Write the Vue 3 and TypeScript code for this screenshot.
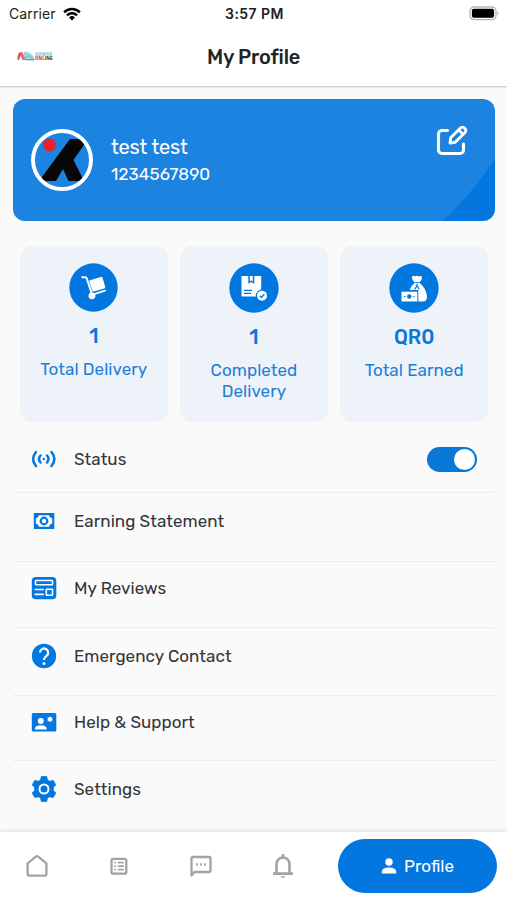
<script setup lang="ts">
import { ref } from 'vue'

interface Stat {
  icon: 'trolley' | 'parcel' | 'money'
  value: string
  label: string
}
interface MenuItem {
  icon: 'status' | 'earning' | 'reviews' | 'emergency' | 'support' | 'settings'
  label: string
}

const online = ref(true)

const stats: Stat[] = [
  { icon: 'trolley', value: '1', label: 'Total Delivery' },
  { icon: 'parcel', value: '1', label: 'Completed Delivery' },
  { icon: 'money', value: 'QR0', label: 'Total Earned' },
]

const menu: MenuItem[] = [
  { icon: 'status', label: 'Status' },
  { icon: 'earning', label: 'Earning Statement' },
  { icon: 'reviews', label: 'My Reviews' },
  { icon: 'emergency', label: 'Emergency Contact' },
  { icon: 'support', label: 'Help & Support' },
  { icon: 'settings', label: 'Settings' },
]
</script>

<template>
  <div class="screen">
    <header class="top">
      <div class="statusbar">
        <div class="carrier">
          <span>Carrier</span>
          <svg class="wifi" viewBox="0 0 19 14">
            <g fill="none" stroke="#000" stroke-width="2.6">
              <path d="M1.2 5.2a11.8 11.8 0 0 1 16.6 0" />
              <path d="M4.2 8.5a7.5 7.5 0 0 1 10.6 0" />
            </g>
            <path d="M6.4 10.7a4.4 4.4 0 0 1 6.2 0L9.5 13.8z" />
          </svg>
        </div>
        <time class="clock">3:57 PM</time>
        <svg class="battery" viewBox="0 0 31 15">
          <rect x="1" y="1" width="26" height="12.6" rx="4" fill="#fff" stroke="#b4b4b4" stroke-width="1.3" />
          <rect x="2.9" y="2.8" width="22.2" height="9" rx="2" fill="#000" />
          <path d="M28.5 5.2q2.2 2.1 0 4.4z" fill="#a9a9a9" />
        </svg>
      </div>
      <div class="titlebar">
        <div class="logo">
          <svg viewBox="0 0 19 11">
            <path d="M7 .8q7-1 10.500 5l1.500 4H8z" fill="#a9dde3" />
            <path d="M0 9.500Q0 2 3.500 1.200L8.500 9.800H6L3.500 5 2 9.500z" fill="#df5060" />
            <path d="M3 1.600l2.500-.8L9.500 9.800H7z" fill="#e8707e" />
            <path d="M7.500 3.500q6 0 9.500 4M9 6q5 0 8 2.500" fill="none" stroke="#5bb5c5" stroke-width=".8" />
            <path d="M9 9.700h10" stroke="#45798d" stroke-width="1" />
          </svg>
          <div class="logo-text">
            <span class="logo-top">ADWAR</span>
            <span class="logo-bottom">ONL<i>INE</i></span>
          </div>
        </div>
        <h1>My Profile</h1>
      </div>
    </header>

    <main>
      <section class="profile-card">
        <svg class="avatar" viewBox="0 0 62 62">
          <clipPath id="avatar-clip"><circle cx="31" cy="31" r="28" /></clipPath>
          <circle cx="31" cy="31" r="30" fill="#1c84e0" />
          <g clip-path="url(#avatar-clip)">
            <path d="M39 10h18L42.500 31 53 52H37.500l-5.500-12-7 12H8z" fill="#070707" />
            <circle cx="18.500" cy="16" r="6.500" fill="#e91f2b" />
          </g>
          <circle cx="31" cy="31" r="29" fill="none" stroke="#fff" stroke-width="3.900" />
        </svg>
        <div class="person">
          <strong>test test</strong>
          <span>1234567890</span>
        </div>
        <svg class="edit" viewBox="0 0 32 32" fill="none" stroke="#fff" stroke-width="3.100" stroke-linecap="round" stroke-linejoin="round">
          <path d="M11.500 5.500H6a3.500 3.500 0 0 0-3.500 3.500v16a3.500 3.500 0 0 0 3.500 3.500h18a3.500 3.500 0 0 0 3.500-3.500v-6" />
          <path d="M14 18l.7-5.200L24.500 3a3.200 3.200 0 0 1 4.500 4.500l-9.800 9.800zM22.800 5l4.200 4.200" stroke-width="2.800" />
        </svg>
      </section>

      <section class="stats">
        <article v-for="s in stats" :key="s.label" class="stat" :class="s.icon">
          <svg class="badge" viewBox="0 0 50 50">
            <circle cx="25" cy="25" r="24.700" fill="#0277df" />
            <g v-if="s.icon === 'trolley'">
              <path d="M13.500 14.500h3.200q1 0 1.400 1.200l5 15" fill="none" stroke="#fff" stroke-width="2" stroke-linecap="round" />
              <path d="M21.500 17.500l11-3.300q1.300-.3 1.700.9l2.700 9.200q.3 1.200-.9 1.600L25.500 29q-1.300.3-1.700-.9l-3.100-9.200q-.3-1.100.8-1.400z" fill="#fff" />
              <circle cx="23.400" cy="33.500" r="3.500" fill="#fff" />
              <path d="M26.500 31.500l10.300-3.300" stroke="#fff" stroke-width="1.900" stroke-linecap="round" />
            </g>
            <g v-else-if="s.icon === 'parcel'">
              <path d="M12.500 13h6.800v7.700l3-1.700 3 1.700V13h6.900v20.500H12.500z" fill="#fff" />
              <path d="M20.800 13h3v5.300l-1.500-.9-1.500.9z" fill="#fff" />
              <path d="M15 27.300h8M15 30.300h7" stroke="#0277df" stroke-width="1.300" />
              <circle cx="33" cy="32.800" r="6.200" fill="#0277df" />
              <circle cx="33" cy="32.800" r="5" fill="#fff" />
              <path d="M30.700 32.700l1.700 1.700 3-3.200" fill="none" stroke="#0277df" stroke-width="1.300" />
            </g>
            <g v-else>
              <path d="M22.800 14q1.700-2 3.700-.6 1.500-1.300 3 0 2.300-1.300 3.700.8 0 2.500-2.700 5h-5Q23 17 22.800 14z" fill="#fff" />
              <path d="M25.500 20h5.200q6.200 5.200 7.300 13 .4 5.500-4.500 5.500h-4.200V27h-8.600q1-4 4.800-7z" fill="#fff" />
              <path d="M28 20.500v2m-2.200 4l2.200-4 2.200 4" fill="none" stroke="#0277df" stroke-width="1.200" />
              <path d="M12.500 28.700h15.800v9.800H12.500z" fill="#fff" />
              <circle cx="20.300" cy="33.500" r="2.200" fill="#0277df" />
              <path d="M15 33.500h1.500m7.700 0h1.500" stroke="#0277df" stroke-width="1.100" />
            </g>
          </svg>
          <b class="value">{{ s.value }}</b>
          <span class="label">{{ s.label }}</span>
        </article>
      </section>

      <ul class="menu">
        <li v-for="m in menu" :key="m.icon" :class="m.icon">
          <div class="entry">
            <svg class="menu-icon" viewBox="0 0 26 26">
              <g v-if="m.icon === 'status'" fill="none" stroke="#0277df" stroke-width="2.500" stroke-linecap="round">
                <path d="M5 6q-5.800 7 0 14M20.500 6q5.800 7 0 14M9.500 9.500q-3 3.500 0 7M16 9.500q3 3.500 0 7" />
                <circle cx="12.800" cy="13" r="1.200" fill="#0277df" stroke="none" />
              </g>
              <g v-else-if="m.icon === 'earning'">
                <path d="M2.800 5h20.500v16H2.800z" fill="#0277df" />
                <path d="M8 7.200h10q.4 2.700 3.200 3.300v5q-2.800.6-3.200 3.300H8q-.4-2.700-3.200-3.300v-5Q7.600 9.900 8 7.200z" fill="#fff" />
                <circle cx="13" cy="13" r="3.300" fill="none" stroke="#0277df" stroke-width="2.200" />
              </g>
              <g v-else-if="m.icon === 'reviews'">
                <rect x=".8" y="2" width="24.500" height="22.300" rx="4" fill="#0277df" />
                <g fill="none" stroke="#fff" stroke-width="1.600">
                  <rect x="4.500" y="5.500" width="17" height="4.200" rx=".8" />
                  <path d="M4.300 14.500h7.900M4.300 19.400h7.900" stroke-linecap="round" />
                  <rect x="15.300" y="14.300" width="6.200" height="6" rx=".5" />
                </g>
              </g>
              <g v-else-if="m.icon === 'emergency'">
                <circle cx="13" cy="13" r="12.200" fill="#0277df" />
                <path d="M9 9.600a4.100 4.100 0 1 1 6.500 3.300q-2.500 1.800-2.500 4" fill="none" stroke="#fff" stroke-width="2.200" />
                <circle cx="13" cy="20.500" r="1.500" fill="#fff" />
              </g>
              <g v-else-if="m.icon === 'support'">
                <rect x=".8" y="4" width="24.500" height="18.400" rx="1.500" fill="#0277df" />
                <circle cx="9.800" cy="12" r="3" fill="#fff" />
                <path d="M3.800 20.500q0-4.200 6-4.200t6 4.200z" fill="#fff" />
                <circle cx="19" cy="10.300" r="2.300" fill="#fff" />
                <path d="M19 7.500v5.600M16.600 8.900l4.800 2.800M21.400 8.900l-4.800 2.800" stroke="#fff" stroke-width=".9" />
              </g>
              <g v-else>
                <path
                  fill="#0277df"
                  d="M10.300.5h5.400l.8 3.400 2.300 1.300 3.300-1 2.800 4.700-2.500 2.400v3.200l2.500 2.500-2.800 4.700-3.300-1-2.300 1.300-.8 3.500h-5.400l-.8-3.500-2.300-1.300-3.300 1L1.100 17l2.500-2.500v-3.200L1.100 8.900l2.800-4.700 3.300 1 2.300-1.300z"
                  stroke="#0277df" stroke-width=".7" stroke-linejoin="round"
                />
                <circle cx="13" cy="13" r="4.500" fill="none" stroke="#fff" stroke-width="2" />
              </g>
            </svg>
            <span>{{ m.label }}</span>
            <button
              v-if="m.icon === 'status'"
              class="toggle" :class="{ on: online }"
              type="button" role="switch" :aria-checked="online"
              @click="online = !online"
            />
          </div>
        </li>
      </ul>
    </main>

    <nav>
      <svg viewBox="0 0 24 24" class="tab">
        <path d="M2.600 9.300v10.400q0 2 2 2h14.800q2 0 2-2V9.300L13.200 2.700q-1.200-.9-2.400 0z" />
      </svg>
      <svg viewBox="0 0 24 24" class="tab">
        <rect x="4.500" y="4.800" width="14.800" height="14.800" rx="1.700" />
        <path d="M7.200 8.700h1.600M7.200 12.200h1.600M7.200 15.700h1.600M10.800 8.700h6M10.800 12.200h6M10.800 15.700h6" stroke-width="1.700" />
      </svg>
      <svg viewBox="0 0 24 24" class="tab">
        <path d="M2.500 21.500V4.500q0-1.500 1.500-1.500h16q1.500 0 1.500 1.500v12q0 1.500-1.500 1.500H5.500z" />
        <path d="M7.200 10.500h1.700M11.200 10.500h1.700M15.200 10.500h1.700" />
      </svg>
      <svg viewBox="0 0 24 24" class="tab bell">
        <path d="M5.500 19.500V10a6.500 6.500 0 0 1 13 0v9.500M2 19.600h20" />
        <path d="M12 0v3.500" />
        <path d="M9.300 22.300h5.400q-2.700 3.600-5.400 0z" fill="#a1a4a4" stroke="none" />
      </svg>
      <button class="profile-tab" type="button">
        <svg viewBox="0 0 16 16" fill="#fff">
          <circle cx="8" cy="4" r="3.700" />
          <path d="M.8 15.500v-1.500q0-4.500 7.200-4.500t7.200 4.500v1.500z" />
        </svg>
        <span>Profile</span>
      </button>
    </nav>
  </div>
</template>

<style>
body {
  margin: 0;
}
</style>

<style scoped>
.screen {
  display: flex;
  flex-direction: column;
  width: 507px;
  height: 900px;
  overflow: hidden;
  background: #fafafa;
  color: #343538;
  font-family: Rubik, Roboto, "Liberation Sans", sans-serif;
}
svg {
  display: block;
  flex: none;
  overflow: visible;
}
.top {
  height: 86px;
  background: #fff;
  box-shadow: 0 1px 2px rgba(0, 0, 0, 0.25);
}
.statusbar {
  display: grid;
  grid-template-columns: 1fr auto 1fr;
  align-items: center;
  height: 27px;
  padding: 0 7px 1px 9px;
  color: #202020;
}
.carrier {
  display: flex;
  align-items: center;
  gap: 7px;
  font: 400 14px Inter, sans-serif;
  letter-spacing: 0.1px;
}
.wifi {
  width: 18px;
  height: 14px;
}
.clock {
  font: 600 14px Inter, sans-serif;
  letter-spacing: 0.45px;
}
.battery {
  width: 31px;
  height: 15px;
  justify-self: end;
}
.titlebar {
  display: grid;
  grid-template-columns: 1fr auto 1fr;
  align-items: center;
  height: 56px;
  padding: 0 17px;
}
.logo {
  display: flex;
  align-items: center;
}
.logo svg {
  width: 18px;
  height: 10px;
}
.logo-text {
  display: flex;
  flex-direction: column;
  font: 800 4.400px/4.500px "Open Sans", sans-serif;
}
.logo-top {
  color: #8ccdd7;
}
.logo-bottom {
  color: #e34a60;
}
.logo-bottom i {
  color: #454f62;
  font-style: normal;
}
h1 {
  margin: 2px 0 0;
  color: #222326;
  font-size: 20px;
  font-weight: 500;
  letter-spacing: -0.2px;
}
main {
  flex: 1;
  padding: 13px 12px 0 13px;
}
.profile-card {
  display: flex;
  align-items: center;
  box-sizing: border-box;
  height: 122px;
  padding: 0 27px 0 18px;
  border-radius: 12px;
  background: radial-gradient(circle at 203px -120px, #1c84e0 331px, #0277df 332px);
}
.avatar {
  width: 62px;
  height: 62px;
}
.person {
  display: flex;
  flex: 1;
  flex-direction: column;
  gap: 3px;
  margin: 0 0 2px 18px;
  color: #fff;
}
.person strong {
  font-size: 20px;
  font-weight: 400;
  letter-spacing: -0.2px;
  line-height: 26px;
}
.person span {
  font-size: 17px;
  letter-spacing: 0.1px;
  line-height: 22px;
}
.edit {
  align-self: flex-start;
  width: 32px;
  height: 32px;
  margin-top: 26px;
}
.stats {
  display: grid;
  grid-template-columns: repeat(3, 147.500px);
  gap: 12.700px;
  padding: 25px 0 0 7px;
}
.stat {
  display: flex;
  flex-direction: column;
  align-items: center;
  box-sizing: border-box;
  height: 176px;
  padding: 17px 12px 0;
  border-radius: 12px;
  background: #edf3f9;
  color: #0878dc;
  text-align: center;
}
.badge {
  width: 50px;
  height: 50px;
}
.value {
  margin-top: 12px;
  font-size: 20px;
  font-weight: 500;
  letter-spacing: -0.1px;
  line-height: 24px;
}
.label {
  margin-top: 11px;
  color: #1c7fda;
  font-size: 17px;
  letter-spacing: 0.05px;
  line-height: 21px;
}
.trolley .badge {
  width: 49px;
  height: 49px;
}
.menu {
  display: grid;
  grid-template-rows: 61px 69px 66px 68px 65px 70px;
  margin: 0;
  padding: 10px 0 0;
  list-style: none;
}
.menu li {
  border-bottom: 1px solid #eceeef;
}
.menu li:last-child {
  border: 0;
}
.entry {
  display: flex;
  align-items: center;
  height: 54px;
  padding: 0 18px;
  font-size: 17px;
  letter-spacing: 0.05px;
}
.earning .entry,
.emergency .entry,
.settings .entry {
  height: 56px;
}
.reviews .entry,
.support .entry {
  height: 52px;
}
.menu-icon {
  width: 26px;
  height: 26px;
  margin-right: 17px;
}
.toggle {
  width: 50px;
  height: 25px;
  margin-left: auto;
  padding: 2px;
  border: 0;
  border-radius: 13px;
  background: #b8bdc3;
}
.toggle::before {
  display: block;
  width: 21px;
  height: 21px;
  border-radius: 50%;
  background: #fff;
  content: "";
}
.toggle.on {
  background: #0877d7;
}
.toggle.on::before {
  margin-left: 24.500px;
}
nav {
  display: grid;
  grid-template-columns: repeat(4, 82px) 159px;
  align-items: center;
  box-sizing: border-box;
  height: 68px;
  padding: 0 10px;
  justify-content: end;
  background: #fff;
  box-shadow: 0 -1px 4px rgba(0, 0, 0, 0.12);
}
.tab {
  width: 24px;
  height: 24px;
  margin-left: 15px;
  fill: none;
  stroke: #a1a4a4;
  stroke-width: 2.300;
  stroke-linejoin: round;
}
.bell {
  stroke-width: 2.600;
}
.profile-tab {
  display: flex;
  align-items: center;
  justify-content: center;
  gap: 7px;
  height: 54px;
  padding: 0;
  border: 0;
  border-radius: 27px;
  background: #0277df;
  color: #fff;
  font: 400 17px Rubik, Roboto, sans-serif;
}
.profile-tab svg {
  width: 16px;
  height: 16px;
}
</style>
